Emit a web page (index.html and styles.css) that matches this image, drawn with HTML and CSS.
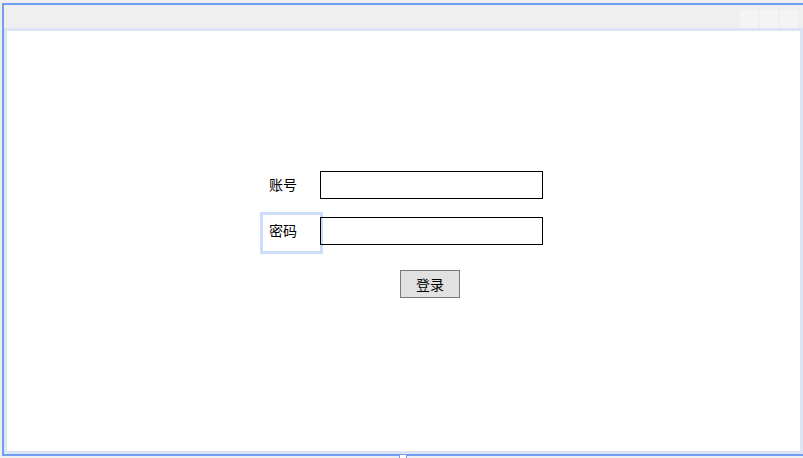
FILE: index.html
```html
<!DOCTYPE html>
<html lang="zh">
<head>
<meta charset="utf-8">
<title>登录</title>
<link rel="stylesheet" href="styles.css">
</head>
<body>
<div class="window">
  <div class="titlebar">
    <span class="tb-btn"></span>
    <span class="tb-btn"></span>
    <span class="tb-btn"></span>
  </div>
  <div class="content">
    <form class="login">
      <label class="lbl">账号</label>
      <input class="field" type="text">
      <label class="lbl selected">密码</label>
      <input class="field" type="password">
      <button class="btn" type="button">登录</button>
    </form>
  </div>
  <span class="handle"></span>
</div>
</body>
</html>
```
FILE: styles.css
```css
html, body {
  margin: 0;
  padding: 0;
  background: #efefef;
  width: 803px;
  height: 458px;
  overflow: hidden;
  font-family: "Noto Sans CJK SC", "Noto Sans", sans-serif;
}
.window {
  position: relative;
  margin: 3px 0 0 2px;
  width: 801px;
  height: 453px;
  box-sizing: border-box;
  border-top: 2px solid #709ef0;
  border-left: 2px solid #709ef0;
  border-bottom: 2px solid #709ef0;
  display: flex;
  flex-direction: column;
}
.titlebar {
  height: 23px;
  background: #efefef;
  display: flex;
  justify-content: flex-end;
  align-items: flex-end;
  gap: 2px;
  padding-right: 5px;
}
.tb-btn {
  width: 18px;
  height: 18px;
  background: #f4f4f4;
}
.content {
  flex: 1;
  background: #fff;
  border: 3px solid #dce5f5;
  display: flex;
  justify-content: center;
  padding-top: 140px;
  padding-right: 2px;
}
.login {
  display: grid;
  grid-template-columns: 58px 223px;
  grid-auto-rows: 28px;
  row-gap: 18px;
  align-self: flex-start;
}
.lbl {
  position: relative;
  display: flex;
  align-items: center;
  padding-left: 7px;
  font-size: 14px;
  color: #000;
}
.lbl:first-child {
  padding-bottom: 2px;
}
.selected {
  padding-bottom: 3px;
}
.selected::after {
  content: "";
  position: absolute;
  left: -2px;
  top: -5px;
  width: 63px;
  height: 42px;
  box-sizing: border-box;
  border: 3px solid #cddcf7;
}
.field {
  position: relative;
  z-index: 1;
  margin: 0;
  box-sizing: border-box;
  height: 28px;
  width: 223px;
  border: 1px solid #000;
  background: transparent;
  outline: none;
  padding: 0 4px;
}
.btn {
  grid-column: 2;
  justify-self: center;
  margin: 7px 0 0 -3px;
  width: 60px;
  height: 28px;
  box-sizing: border-box;
  border: 1px solid #7a7a7a;
  background: #e1e1e1;
  font-family: "Noto Sans CJK SC", "Noto Sans", sans-serif;
  font-size: 14px;
  color: #000;
  padding: 0;
}
.handle {
  position: absolute;
  left: 395px;
  bottom: -5px;
  width: 6px;
  height: 4px;
  border: 1px solid #709ef0;
  border-bottom: none;
  background: #fff;
}
```
